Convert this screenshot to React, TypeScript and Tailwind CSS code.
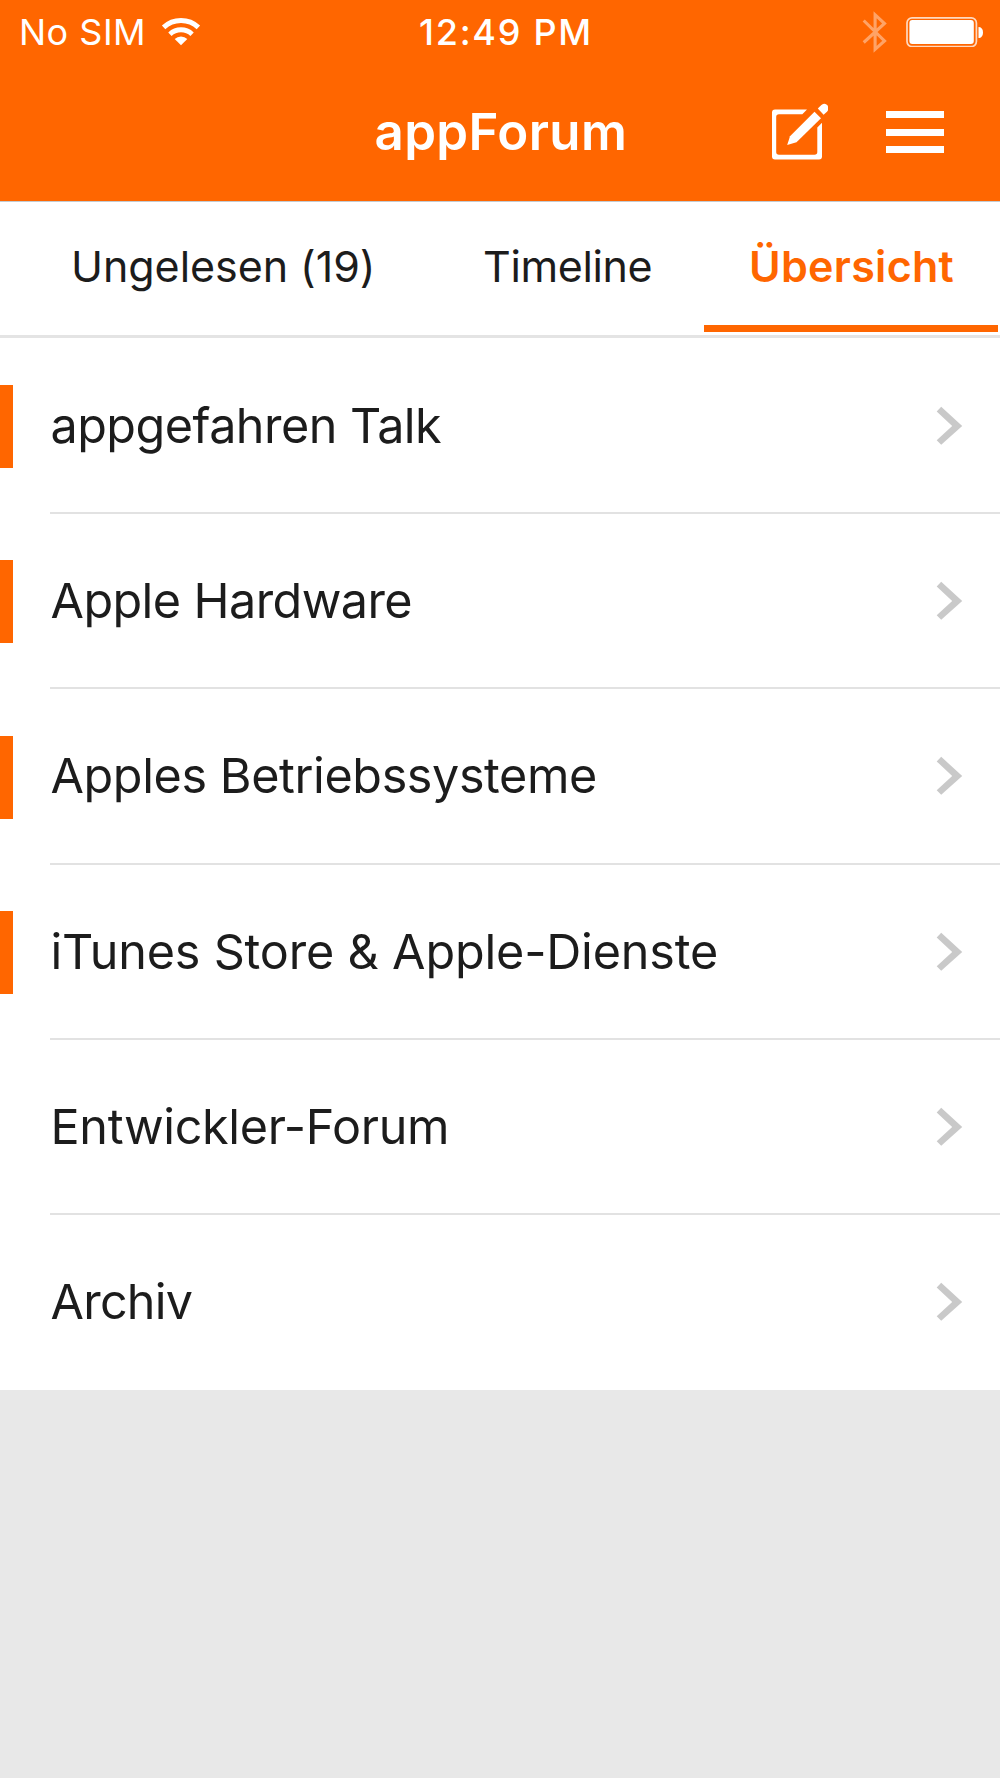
type Forum = { title: string; unread: boolean; tracking: string; height: string };

const forums: Forum[] = [
  { title: 'appgefahren Talk', unread: true, tracking: 'tracking-[-0.53px]', height: 'h-[176px] pt-px' },
  { title: 'Apple Hardware', unread: true, tracking: 'tracking-[-0.58px]', height: 'h-[175px]' },
  { title: 'Apples Betriebssysteme', unread: true, tracking: 'tracking-[-0.4px]', height: 'h-[176px]' },
  { title: 'iTunes Store & Apple-Dienste', unread: true, tracking: 'tracking-[-0.17px]', height: 'h-[175px]' },
  { title: 'Entwickler-Forum', unread: false, tracking: 'tracking-[-0.33px]', height: 'h-[175px]' },
  { title: 'Archiv', unread: false, tracking: 'tracking-[-0.75px]', height: 'h-[175px]' },
];

function WifiIcon() {
  return (
    <svg className="ml-[15px] h-[30px] w-10 shrink-0" viewBox="0 0 40 30" fill="none" stroke="#fff">
      <path d="M2.6 10.3A25.6 25.6 0 0 1 37.4 10.3" strokeWidth="5" />
      <path d="M8.9 17.2A16.1 16.1 0 0 1 31.1 17.2" strokeWidth="4.8" />
      <path d="M20 28.3L13.7 22A9 9 0 0 1 26.3 22Z" fill="#fff" stroke="none" />
    </svg>
  );
}

function BluetoothIcon() {
  return (
    <svg className="h-11 w-[26px] shrink-0" viewBox="0.3 0 26 44" fill="none" stroke="#ffa366" strokeWidth="3.1">
      <path d="M2 10.5L22.8 31L13.4 39.3V4.7L22.8 13.5L2 32.5" />
    </svg>
  );
}

function BatteryIcon() {
  return (
    <svg className="h-[30px] w-[78px] shrink-0" viewBox="0 0 78 30">
      <rect x="1" y="0.9" width="69.4" height="28.6" rx="5" fill="none" stroke="#ffd9c0" strokeWidth="1.7" />
      <rect x="3.4" y="3.1" width="64.4" height="24" rx="3" fill="#fff" />
      <path d="M72.5 10C75.2 10 77 12 77 15.4S75.2 21 72.5 21Z" fill="#fff" />
    </svg>
  );
}

function ComposeIcon() {
  return (
    <svg className="h-[58px] w-[58px] shrink-0" viewBox="0 0.5 58 58" fill="#fff">
      <path d="M37 7H5Q2 7 2 10V54Q2 57 5 57H49Q52 57 52 54V20.3L47.3 25V49.5Q47.3 52.3 44.5 52.3H9Q6.2 52.3 6.2 49.5V14.5Q6.2 11.7 9 11.7H32.3Z" />
      <path d="M17.2 42.5L20 33.8L44.5 9.3L51 15.8L26.5 39.8Z" />
      <path d="M47.8 6L51.4 2.6Q55 -0.2 57.6 3Q59.6 6.1 57 9.2L53.6 12.2Z" />
    </svg>
  );
}

function MenuIcon() {
  return (
    <div className="flex h-[42px] w-[58px] flex-col justify-between">
      <span className="h-[7px] bg-white" />
      <span className="h-[7px] bg-white" />
      <span className="h-[7px] bg-white" />
    </div>
  );
}

function ChevronIcon() {
  return (
    <svg className="mr-[37px] h-10 w-[27px] shrink-0" viewBox="0 0 27 40" fill="#c9c9c9">
      <path d="M5.2 0.8L26.2 20L5.2 38.8L0.7 34.3L16.2 20L0.7 5.4Z" />
    </svg>
  );
}

function ForumRow({ title, unread, tracking, height, last }: Forum & { last: boolean }) {
  return (
    <li className={`flex items-center ${height}`}>
      <span className={unread ? 'h-[83px] w-[13px] shrink-0 bg-[#ff6600]' : 'w-[13px] shrink-0'} />
      <div
        className={`ml-[37px] flex h-full flex-1 items-center justify-between border-b-2 ${last ? 'border-transparent' : 'border-[#e2e2e2]'}`}
      >
        <span className={`pl-[0.5px] text-[48.5px] leading-[60px] whitespace-nowrap ${tracking}`}>{title}</span>
        <ChevronIcon />
      </div>
    </li>
  );
}

export default function App() {
  return (
    <div className="flex h-[1778px] w-[1000px] flex-col overflow-hidden bg-[#e8e8e8] font-['Inter',sans-serif] text-[#1c1c1c]">
      <header className="h-[202px] shrink-0 border-b border-[#c3cbd1] bg-[#ff6600] text-white">
        <div className="grid h-16 grid-cols-[419px_1fr_auto] items-center">
          <div className="flex items-center pl-[19px]">
            <span className="text-[36px] leading-[44px] font-normal tracking-[0.5px] whitespace-nowrap">No SIM</span>
            <WifiIcon />
          </div>
          <span className="text-[36px] leading-[44px] font-medium tracking-[1.75px] whitespace-nowrap">12:49 PM</span>
          <div className="flex items-center gap-[18px] pr-[16px]">
            <BluetoothIcon />
            <BatteryIcon />
          </div>
        </div>
        <div className="grid h-[136px] grid-cols-[374px_1fr_auto] items-center">
          <span />
          <h1 className="pl-[0.5px] text-[51px] leading-[62px] font-semibold tracking-[0.38px] whitespace-nowrap">appForum</h1>
          <div className="flex items-center gap-[58px] pr-[56px]">
            <ComposeIcon />
            <MenuIcon />
          </div>
        </div>
      </header>

      <nav className="flex h-[136px] shrink-0 items-start border-b-[3px] border-[#e4e4e4] bg-white text-[43px] leading-[129px]">
        <button className="w-[414px] pl-[71px] text-left tracking-[-0.05px] whitespace-nowrap">Ungelesen (19)</button>
        <button className="w-[290px] pl-[69px] text-left tracking-[-0.38px] whitespace-nowrap">Timeline</button>
        <button className="h-[130px] w-[294px] border-b-[7px] border-[#ff6600] pl-[45px] text-left font-semibold tracking-[0.3px] whitespace-nowrap text-[#ff6600]">
          <span className="block h-[123px]">Übersicht</span>
        </button>
      </nav>

      <ul className="shrink-0 bg-white">
        {forums.map((forum, i) => (
          <ForumRow key={forum.title} {...forum} last={i === forums.length - 1} />
        ))}
      </ul>
    </div>
  );
}
